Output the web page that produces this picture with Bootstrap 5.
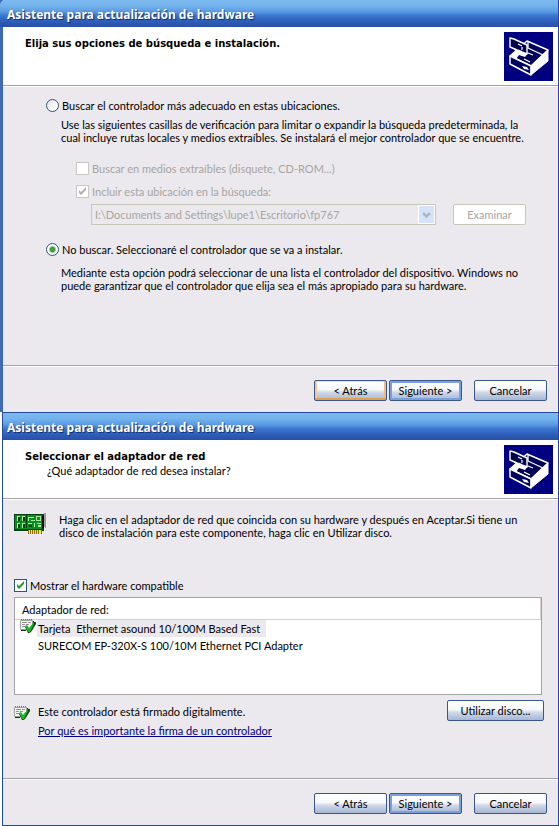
<!DOCTYPE html>
<html lang="es">
<head>
<meta charset="utf-8">
<meta name="viewport" content="width=device-width, initial-scale=1">
<title>Asistente para actualización de hardware</title>
<link href="https://cdn.jsdelivr.net/npm/bootstrap@5.3.0/dist/css/bootstrap.min.css" rel="stylesheet">
<style>
  :root { --face: #ebe9ed; --frame: #24479f; --shade: #a5a2a5; --mute: #a7a5a2; }
  body { font-family: "Lato", sans-serif; font-size: 11px; line-height: 13px; color: #000; background: #fff; }
  .wizard { background: var(--face); border-right: 1px solid var(--frame); border-bottom: 1px solid var(--frame); }
  .wizard-first { border-left: 3px solid #3e68b8; border-bottom: 0; }
  .wizard-second { margin-left: 2px; border-left: 1px solid var(--frame); }
  .caption { height: 27px; padding-left: 4px; font: bold 12px/29px "Noto Sans", sans-serif; color: #fff; text-shadow: 1px 1px 1px #10286b;
    background: linear-gradient(#7bb9ee 0, #74b4ec 20%, #5c9be4 42%, #3a74cc 60%, #2c5cb8 82%, #2a4fa6 100%); }
  .wizard-first .caption { margin-left: -3px; padding-left: 7px; border-top-left-radius: 5px; }
  .wizard-second .caption { border-top: 1px solid #24479f; height: 28px; }
  .banner { background: #fff; height: 59px; padding: 5px 5px 0 22px; border-bottom: 1px solid var(--shade); }
  .banner h1 { font: bold 10px/14px "DejaVu Sans", sans-serif; margin: 5px 0 0; }
  .banner h1 + p { padding-left: 22px; }
  .pane { box-shadow: inset 0 1px #fff; }
  .pane-options { min-height: 279px; padding: 13px 32px 0 43px; }
  .pane-adapter { min-height: 279px; padding: 14px 14px 0 11px; }
  .actions { border-top: 1px solid var(--shade); box-shadow: inset 0 1px #fff; padding: 14px 11px 11px; gap: 2px; }
  .xp-btn { width: 73px; height: 21px; padding: 0; font-size: 11px; line-height: 13px; color: #000; border: 1px solid #3a568c; border-radius: 2px;
    background: linear-gradient(#fff, #f6f8fb 45%, #d0d9e8 60%, #a5b6d4 100%); }
  .xp-btn:disabled { color: var(--mute); background: #fff; border-color: #c9c7ba; opacity: 1; }
  .xp-btn.hot { box-shadow: inset 0 -2px #e3a04b, inset 2px 0 #f3c98c, inset -2px 0 #f0bd78, inset 0 1px #fbdfb5; }
  .xp-btn.primary { box-shadow: inset 0 0 0 2px #7ba0dc; }
  .xp-btn.cancel { margin-left: 10px; }
  .xp-btn.wide { width: 97px; margin-top: 5px; }
  .opt { display: flex; align-items: center; gap: 3px; min-height: 0; margin: 0; padding: 0; }
  .opt .form-check-input { flex: none; float: none; width: 13px; height: 13px; margin: 0; border: 1px solid #2c5578; background-color: #fff; background-size: 100% 100%; }
  .opt .form-check-input[type=checkbox] { border-radius: 0; }
  .opt .form-check-input[type=radio] { background-image: linear-gradient(135deg, #dcdfe4, #fff 70%); }
  .opt .form-check-input[type=radio]:checked { background-color: #fff; background-image: radial-gradient(circle, #48b53e 0, #2f9a2b 2px, #fff 4px); }
  .opt .form-check-input[type=checkbox]:checked { background-color: #fff; background-image: url("data:image/svg+xml,%3Csvg xmlns='http://www.w3.org/2000/svg' viewBox='0 0 11 11'%3E%3Cpath d='M2 4v3l2 2 5-5V1L4 6z' fill='%2321a121'/%3E%3C/svg%3E"); }
  .opt .form-check-input:disabled { opacity: 1; border-color: #c9c7c4; }
  .opt .form-check-input[type=checkbox]:disabled:checked { background-image: url("data:image/svg+xml,%3Csvg xmlns='http://www.w3.org/2000/svg' viewBox='0 0 11 11'%3E%3Cpath d='M2 4v3l2 2 5-5V1L4 6z' fill='%23b3b1ae'/%3E%3C/svg%3E"); }
  .opt .form-check-input:disabled ~ .form-check-label { color: var(--mute); opacity: 1; }
  .explain { padding-left: 15px; white-space: nowrap; }
  .near { margin-top: 6px; }
  .apart { margin-top: 10px; }
  .section-gap { margin-top: 18px; }
  .sub { padding-left: 30px; }
  .route { padding-left: 15px; gap: 17px; }
  .path-select { height: 21px; min-height: 0; padding: 0 20px 0 3px; border: 1px solid #c9c7ba; border-radius: 0; font-size: 11px; line-height: 13px; }
  .path-select:disabled { color: var(--mute); background: var(--face) url("data:image/svg+xml,%3Csvg xmlns='http://www.w3.org/2000/svg' viewBox='0 0 17 19'%3E%3Cpath d='M0 0h17v19H0z' fill='%23fff'/%3E%3Crect x='1' y='1' width='15' height='17' rx='1' fill='%23d5e2f8'/%3E%3Cpath d='M5 8l3.500 3.500L12 8' fill='none' stroke='%23adb9bd' stroke-width='2.500'/%3E%3C/svg%3E") right 0 center / 17px 19px no-repeat; }
  .listing { min-height: 98px; margin: 5px 2px 0 0; background: #fff; border: 1px solid var(--shade); }
  .listing table { width: 100%; border-collapse: collapse; }
  .listing th { height: 21px; padding: 2px 0 0 7px; font-weight: normal; border-bottom: 1px solid #d4d2d0; border-right: 1px solid #d4d2d0; }
  .listing td { padding: 0; height: 17px; }
  .listing td:first-child { width: 22px; padding-left: 5px; }
  .listing td svg { margin-top: -4px; }
  .entry { display: inline-block; padding: 2px 6px 2px 1px; white-space: pre; }
  .entry.chosen { background: var(--face); }
  .signed a { color: #000080; }
  .intro { gap: 13px; }
  .intro .explain { padding-left: 0; }
  svg { display: block; flex: none; }
</style>
<script src="https://cdn.jsdelivr.net/npm/bootstrap@5.3.0/dist/js/bootstrap.bundle.min.js" defer></script>
</head>
<body>
<svg width="0" height="0" class="position-absolute" aria-hidden="true">
  <defs>
    <pattern id="dither" width="4" height="4" patternUnits="userSpaceOnUse"><path fill="#000080" d="M0 0h4v4H0z"/><path fill="#000038" d="M1 1h1v1H1zM3 3h1v1H3z"/></pattern>
    <symbol id="drawer" viewBox="0 0 49 49">
      <path fill="url(#dither)" d="M0 0h49v49H0z"/>
      <g stroke="#fff" stroke-linejoin="round">
        <path fill="#000058" stroke-width="1.500" d="M23 9l21 9-17 16-21-10 8-7z"/>
        <path fill="#fff" stroke="none" d="M7 23l7-7 10 5-3 4-6-2-3 4z"/>
        <path fill="none" stroke-width="1.300" d="M24 9v7l15 7M24 21l5 2M20 27l6 3"/>
        <path fill="#000060" stroke-width="1.500" d="M6 24l21 10v9L6 32z"/>
        <path fill="#fff" d="M27 34l17-16v11L27 43z"/>
        <path fill="#fff" stroke="none" d="M18 34l5 1 2 3-5-1z"/>
        <path fill="#000048" stroke-width="1.400" d="M6 6l4 1 13 6v9l-5-2-2-1-3-1-7-3z"/>
        <path fill="none" stroke-width="1.200" d="M14 12l4 2M18 15v3M10 17l3 1"/>
      </g>
    </symbol>
    <symbol id="signature" viewBox="0 0 16 16">
      <path fill="#f4f6f2" stroke="#9aa39a" d="M.5 2.500h12v9H.500z"/>
      <path fill="none" stroke="#4f8d51" stroke-dasharray="1 1" d="M1 1.500h12"/>
      <path fill="#8b918b" d="M2 4h5v1H2zM2 8h3v1H2zM6 6h3v1H6z"/>
      <path fill="#a985a9" d="M2 6h3v1H2zM8 4h3v1H8z"/>
      <path fill="#222" d="M1 12h5v1H1zM13 3h1v3h-1z"/>
      <path fill="#123c12" d="M5 9l2-1 2 3 5-7h2v2l-5 8-2 1H8z"/>
      <path fill="#18b828" d="M5 8l2-1 2 3 5-6v2l-4 8H8z"/>
    </symbol>
  </defs>
</svg>

<section class="wizard wizard-first">
  <div class="caption">Asistente para actualización de hardware</div>
  <header class="banner d-flex justify-content-between">
    <div><h1>Elija sus opciones de búsqueda e instalación.</h1></div>
    <svg width="49" height="49" aria-hidden="true"><use href="#drawer"/></svg>
  </header>
  <form id="search" class="pane pane-options">
    <div class="form-check opt"><input class="form-check-input" type="radio" name="mode" id="mode-search"><label class="form-check-label" for="mode-search">Buscar el controlador más adecuado en estas ubicaciones.</label></div>
    <p class="explain near mb-0">Use las siguientes casillas de verificación para limitar o expandir la búsqueda predeterminada, la<br>cual incluye rutas locales y medios extraíbles. Se instalará el mejor controlador que se encuentre.</p>
    <div class="sub section-gap">
      <div class="form-check opt"><input class="form-check-input" type="checkbox" id="removable" disabled><label class="form-check-label" for="removable">Buscar en medios extraíbles (disquete, CD-ROM...)</label></div>
      <div class="form-check opt apart"><input class="form-check-input" type="checkbox" id="include" checked disabled><label class="form-check-label" for="include">Incluir esta ubicación en la búsqueda:</label></div>
      <div class="route d-flex near">
        <select class="form-select path-select" aria-label="Ubicación" disabled><option>I:\Documents and Settings\lupe1\Escritorio\fp767</option></select>
        <button type="button" class="btn xp-btn flex-shrink-0" disabled>Examinar</button>
      </div>
    </div>
    <div class="form-check opt section-gap"><input class="form-check-input" type="radio" name="mode" id="mode-choose" checked><label class="form-check-label" for="mode-choose">No buscar. Seleccionaré el controlador que se va a instalar.</label></div>
    <p class="explain apart mb-0">Mediante esta opción podrá seleccionar de una lista el controlador del dispositivo. Windows no<br>puede garantizar que el controlador que elija sea el más apropiado para su hardware.</p>
  </form>
  <footer class="actions d-flex justify-content-end">
    <button type="button" class="btn xp-btn hot">&lt; Atrás</button>
    <button type="button" class="btn xp-btn primary">Siguiente &gt;</button>
    <button type="button" class="btn xp-btn cancel">Cancelar</button>
  </footer>
</section>

<section class="wizard wizard-second">
  <div class="caption">Asistente para actualización de hardware</div>
  <header class="banner d-flex justify-content-between">
    <div><h1>Seleccionar el adaptador de red</h1><p class="mb-0">¿Qué adaptador de red desea instalar?</p></div>
    <svg width="49" height="49" aria-hidden="true"><use href="#drawer"/></svg>
  </header>
  <form class="pane pane-adapter">
    <div class="intro d-flex">
      <svg width="32" height="22" viewBox="0 0 32 22" shape-rendering="crispEdges" aria-hidden="true">
        <path fill="#063f10" d="M0 1h30v17H0z"/><path fill="#0b8d20" d="M1 2h27v14H1z"/>
        <path fill="#9a9a9a" d="M30 0h2v15h-1v-1h-1z"/><path fill="#111" d="M28 3h2v12h-2z"/>
        <path fill="#b8f0b0" d="M3 3h3v5H3zM8 3h3v5H8zM3 10h3v5H3zM8 10h3v5H8z"/><path fill="#063f10" d="M4 4h2v4H4zM9 4h2v4H9zM4 11h2v4H4zM9 11h2v4H9z"/>
        <path fill="#a9e8a0" d="M14 4h6v1h-6zM14 5h1v3h-1zM17 7h4v1h-4zM22 3h5v5h-5zM14 10h4v1h-4zM20 10h1v4h-1zM23 10h4v1h-4zM24 12h3v2h-3z"/>
        <path fill="#0b8d20" d="M23 4h3v3h-3z"/><path fill="#063f10" d="M15 12h3v2h-3zM12 2h1v13h-1z"/>
        <path fill="#857000" d="M14 17h14v4H14z"/><path fill="#f7e34c" d="M15 17h1v4h-1zM17 17h1v4h-1zM19 17h1v4h-1zM21 17h1v4h-1zM23 17h1v4h-1zM25 17h2v4h-2z"/>
      </svg>
      <p class="explain mb-0">Haga clic en el adaptador de red que coincida con su hardware y después en Aceptar.Si tiene un<br>disco de instalación para este componente, haga clic en Utilizar disco.</p>
    </div>
    <div class="form-check opt mt-4 pt-3"><input class="form-check-input" type="checkbox" id="compat" checked><label class="form-check-label" for="compat">Mostrar el hardware compatible</label></div>
    <div class="listing">
      <table>
        <thead><tr><th colspan="2" scope="col">Adaptador de red:</th></tr></thead>
        <tbody>
          <tr><td><svg width="16" height="16" aria-hidden="true"><use href="#signature"/></svg></td><td><span class="entry chosen">Tarjeta  Ethernet asound 10/100M Based Fast</span></td></tr>
          <tr><td></td><td><span class="entry">SURECOM EP-320X-S 100/10M Ethernet PCI Adapter</span></td></tr>
        </tbody>
      </table>
    </div>
    <div class="signed d-flex justify-content-between">
      <div class="d-flex gap-2 apart">
        <svg width="16" height="16" aria-hidden="true"><use href="#signature"/></svg>
        <div><div>Este controlador está firmado digitalmente.</div><div class="near"><a href="#">Por qué es importante la firma de un controlador</a></div></div>
      </div>
      <button type="button" class="btn xp-btn wide">Utilizar disco...</button>
    </div>
  </form>
  <footer class="actions d-flex justify-content-end">
    <button type="button" class="btn xp-btn">&lt; Atrás</button>
    <button type="button" class="btn xp-btn primary">Siguiente &gt;</button>
    <button type="button" class="btn xp-btn cancel">Cancelar</button>
  </footer>
</section>
</body>
</html>
